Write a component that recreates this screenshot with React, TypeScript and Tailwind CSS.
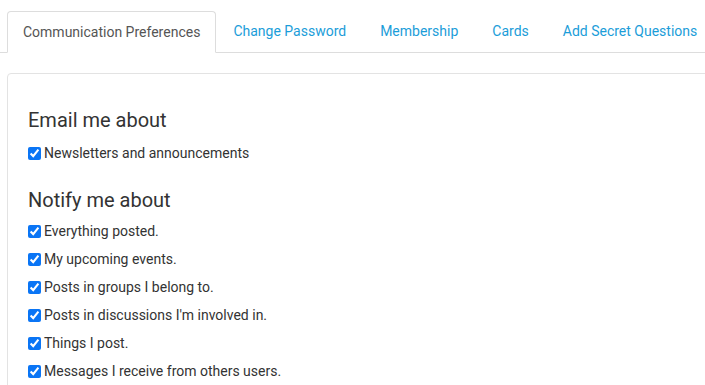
import React from 'react';

const TABS = ['Communication Preferences', 'Change Password', 'Membership', 'Cards', 'Add Secret Questions'];

const NOTIFY = [
  'Everything posted.',
  'My upcoming events.',
  'Posts in groups I belong to.',
  "Posts in discussions I'm involved in.",
  'Things I post.',
  'Messages I receive from others users.',
];

function Check({ label }: { label: string }) {
  return (
    <label className="flex items-center h-[28px] text-[14px] text-[#333]">
      <input type="checkbox" defaultChecked className="w-[13px] h-[13px] m-0 mr-[3px] accent-[#0a75f5]" />
      <span>{label}</span>
    </label>
  );
}

export default function App() {
  return (
    <div className="w-[705px] h-[385px] overflow-hidden bg-white" style={{ fontFamily: 'Roboto, "Liberation Sans", sans-serif' }}>
      <ul className="flex pl-[7px] pt-[11px] border-b border-[#dddddd]">
        {TABS.map((t, i) => (
          <li key={t} className="-mb-px mr-[2px] first:mr-[1px] shrink-0">
            {i === 0 ? (
              <span className="block h-[42px] leading-[40px] px-[15px] text-[14px] text-[#555] bg-white border border-[#dddddd] border-b-white rounded-t-[4px]">
                {t}
              </span>
            ) : (
              <a className="block h-[42px] leading-[40px] px-[16px] text-[14px] text-[#1b9dd9]">{t}</a>
            )}
          </li>
        ))}
      </ul>
      <div className="ml-[7px] mt-[20px] w-[720px] h-[400px] border border-[#e3e3e3] rounded-[4px] pl-[20px] pt-[33px]">
        <h3 className="text-[20px] leading-[26px] text-[#333] mb-[6px]">Email me about</h3>
        <Check label="Newsletters and announcements" />
        <h3 className="text-[20px] leading-[26px] text-[#333] mt-[20px] mb-[4px]">Notify me about</h3>
        {NOTIFY.map((n) => (
          <Check key={n} label={n} />
        ))}
      </div>
    </div>
  );
}
